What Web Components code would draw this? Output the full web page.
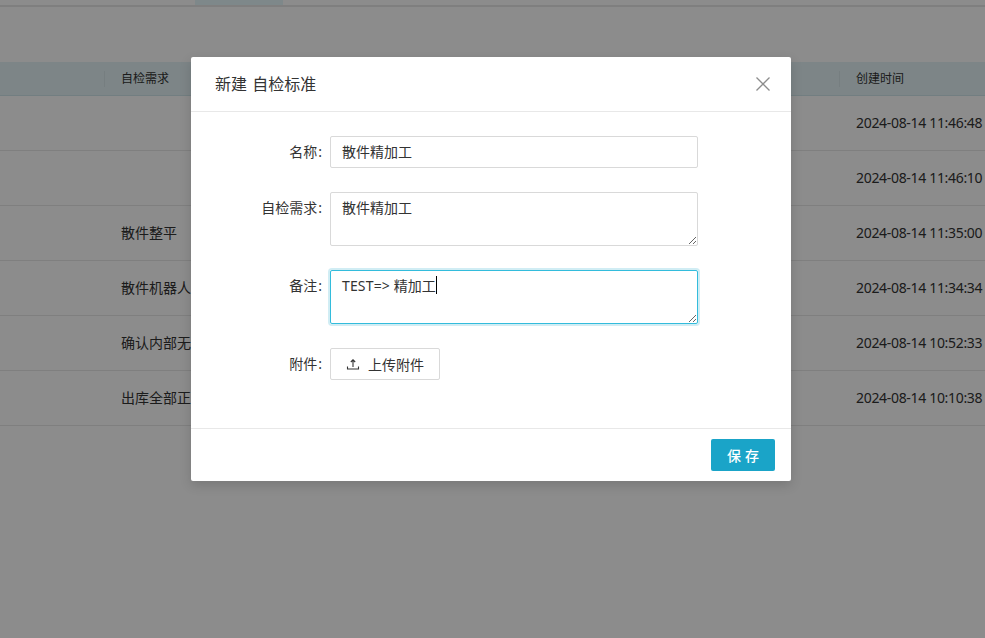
<!DOCTYPE html>
<html><head><meta charset="utf-8"><style>
html,body{margin:0;height:100%;overflow:hidden}
body{background:#fff;font-family:"Noto Sans","Noto Sans CJK SC",sans-serif;font-size:14px;color:#333}
</style></head><body>
<app-page>
  <bg-row slot="rows" note="" date="2024-08-14 11:46:48"></bg-row>
  <bg-row slot="rows" note="" date="2024-08-14 11:46:10"></bg-row>
  <bg-row slot="rows" note="散件整平" date="2024-08-14 11:35:00"></bg-row>
  <bg-row slot="rows" note="散件机器人" date="2024-08-14 11:34:34"></bg-row>
  <bg-row slot="rows" note="确认内部无" date="2024-08-14 10:52:33"></bg-row>
  <bg-row slot="rows" note="出库全部正" date="2024-08-14 10:10:38"></bg-row>
</app-page>
<modal-mask>
  <modal-dialog title-text="新建 自检标准">
    <form-row label="名称"><text-field>散件精加工</text-field></form-row>
    <form-row label="自检需求"><text-area>散件精加工</text-area></form-row>
    <form-row label="备注"><text-area focused><span style="letter-spacing:.15px">TEST=&gt; </span>精加工</text-area></form-row>
    <form-row label="附件"><upload-button>上传附件</upload-button></form-row>
  </modal-dialog>
</modal-mask>
<script>
function def(name, html, init){
  customElements.define(name, class extends HTMLElement{
    constructor(){super();this.attachShadow({mode:'open'}).innerHTML=html;}
    connectedCallback(){ if(init) init(this,this.shadowRoot); }
  });
}
def('app-page',`<style>
:host{display:block;height:638px;overflow:hidden}
.top{height:5px;border-bottom:2px solid #e8e8e8;display:flex;padding-left:195px;background:#fff}
.tab{width:88px;background:#e6f7fb}
.head{margin-top:55px;height:33px;display:grid;grid-template-columns:104px 735px 1fr;align-items:center;background:#e4f3f6;border-bottom:1px solid #cfe6ec;font-size:12px}
.head>div{height:16px;line-height:16px;padding-left:16px;border-left:1px solid #d8e6ea;white-space:nowrap}
.head>div:first-child{border-left:0}
</style>
<div class="top"><div class="tab"></div></div>
<div class="head"><div></div><div>自检需求</div><div>创建时间</div></div>
<slot name="rows"></slot>`);
def('bg-row',`<style>
:host{display:grid;grid-template-columns:104px 735px 1fr;height:54px;box-sizing:content-box;border-bottom:1px solid #e8e8e8;align-items:center;white-space:nowrap}
div{padding:0 0 2px 17px}
#d{letter-spacing:-.32px}
</style><div></div><div id="n"></div><div id="d"></div>`,(e,s)=>{
  s.getElementById('n').textContent=e.getAttribute('note');
  s.getElementById('d').textContent=e.getAttribute('date');
});
def('modal-mask',`<style>
:host{position:absolute;inset:0;background:rgba(0,0,0,.45);display:flex;justify-content:center;align-items:flex-start;padding-top:57px;padding-right:3px;box-sizing:border-box}
</style><slot></slot>`);
def('modal-dialog',`<style>
:host{display:flex;flex-direction:column;width:600px;height:424px;background:#fff;border-radius:2px;box-shadow:0 4px 12px rgba(0,0,0,.15)}
.h{height:55px;box-sizing:border-box;border-bottom:1px solid #e8e8e8;display:flex;align-items:center;justify-content:space-between;padding:0 20px 2px 24px;font-size:16px;color:#333;word-spacing:1px}
.h svg{margin-top:2px}
.b{flex:1;padding:24px 0 0;display:flex;flex-direction:column;gap:24px}
.f{height:53px;box-sizing:border-box;border-top:1px solid #e8e8e8;display:flex;justify-content:flex-end;align-items:flex-start;padding:10px 16px 0}
button{width:64px;height:32px;border:0;border-radius:2px;background:#1aa4c8;color:#fff;font:inherit;font-size:14px;font-weight:500;letter-spacing:4px;padding:0 0 0 4px}
svg{display:block}
</style>
<div class="h"><span id="t"></span><svg width="16" height="16" viewBox="0 0 16 16"><path d="M1.5 1.5l13 13M14.5 1.5l-13 13" stroke="#8c8c8c" stroke-width="1.3" fill="none"/></svg></div>
<div class="b"><slot></slot></div>
<div class="f"><button>保存</button></div>`,(e,s)=>{s.getElementById('t').textContent=e.getAttribute('title-text');});
def('form-row',`<style>
:host{display:grid;grid-template-columns:139px 368px;align-items:start}
.l{text-align:right;padding-right:8px;line-height:32px;color:#333;white-space:nowrap}
.l span{padding-left:1px}
.c{min-width:0}
</style><div class="l"><b style="font-weight:400" id="x"></b><span>:</span></div><div class="c"><slot></slot></div>`,(e,s)=>{s.getElementById('x').textContent=e.getAttribute('label');});
def('text-field',`<style>
:host{display:block;height:32px;box-sizing:border-box;border:1px solid #d9d9d9;border-radius:2px;padding:0 11px;line-height:30px;color:#333}
</style><slot></slot>`);
def('text-area',`<style>
:host{display:block;height:54px;box-sizing:border-box;border:1px solid #d9d9d9;border-radius:2px;padding:4px 11px;line-height:22px;color:#333;overflow:auto;resize:vertical}
:host([focused]){border-color:#33bcdc;box-shadow:0 0 0 2px rgba(26,164,200,.2)}
:host([focused]) .c{display:inline-block;width:1px;height:18px;background:#000;vertical-align:-3px}
.c{display:none}
</style><slot></slot><span class="c"></span>`);
def('upload-button',`<style>
:host{display:inline-flex;align-items:center;height:32px;box-sizing:border-box;border:1px solid #d9d9d9;border-radius:2px;padding:0 15px;gap:8px;color:#333;background:#fff}
svg{display:block}
</style><svg width="14" height="14" viewBox="0 0 14 14" fill="none" stroke="#333" stroke-width="1.1"><path d="M7 10V3M4.8 5L7 2.8 9.2 5M1.5 9.5V12h11V9.5"/></svg><slot></slot>`);
</script>
</body></html>
